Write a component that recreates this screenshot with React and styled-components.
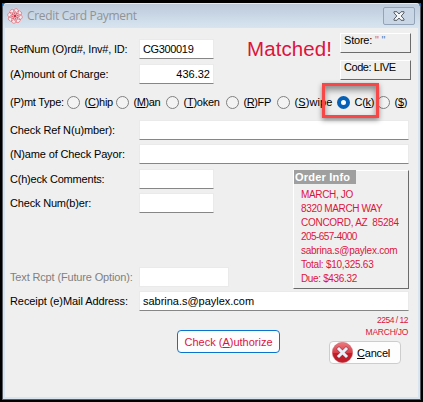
import React from 'react';
import styled, { createGlobalStyle } from 'styled-components';

const GlobalStyle = createGlobalStyle`
  body { margin: 0; background: #000; overflow: hidden; }
  * { box-sizing: border-box; }
`;

const crimson = '#dc143c';

const Screen = styled.div`
  width: 423px;
  height: 402px;
  padding: 3px 2px 2px;
  background: #000;
  font: 11px/14px "Liberation Sans", Arial, sans-serif;
  color: #000;
  white-space: pre;
`;

const Desktop = styled.div`
  height: 397px;
  background: #0c63ad;
`;

const Dialog = styled.div`
  height: 397px;
  display: flex;
  flex-direction: column;
  border: 1px solid #555b60;
  border-top-color: #e3ebf2;
  border-radius: 5px 5px 0 0;
  background: #d8e5f1;
  padding: 0 2px 2px;
`;

const TitleBar = styled.header`
  height: 24px;
  flex: none;
  display: flex;
  align-items: center;
  margin: 0 -2px;
  padding: 0 5px 0 4px;
  border-radius: 4px 4px 0 0;
  background: linear-gradient(#bccada, #d8e5f1);
`;

const Title = styled.h1`
  flex: 1;
  margin: 0 0 0 4px;
  font: 12px/16px "Open Sans", sans-serif;
  letter-spacing: ${(p) => p.$spacing}px;
  color: #909396;
`;

const CloseButton = styled.button`
  width: 32px;
  height: 18px;
  padding: 0;
  display: grid;
  place-items: center;
  border: 1px solid #93a3b8;
  border-radius: 2px;
  background: #c9d6e5;
`;

const Body = styled.main`
  flex: 1;
  display: flex;
  flex-direction: column;
  padding: 11px 0 0 5px;
  background: #efefef;
`;

const TopArea = styled.section`
  display: flex;
  height: 46px;
`;

const FormColumn = styled.div`
  width: ${(p) => p.$width}px;
  display: flex;
  flex-direction: column;
  gap: ${(p) => p.$gap}px;
`;

const FormRow = styled.label`
  display: grid;
  grid-template-columns: 129px ${(p) => p.$field}px;
  align-items: center;
  height: 20px;
  color: ${(p) => (p.$disabled ? '#7f7f7f' : '#000')};
`;

const FutureRow = styled(FormRow)`
  margin-top: auto;
`;

const Text = styled.span`
  letter-spacing: ${(p) => p.$spacing || 0}px;
`;

const Field = styled.span`
  height: 20px;
  padding: 2px 3px 0;
  background: #fff;
  border: 1px solid #eaeaea;
  border-bottom-color: ${(p) => (p.$disabled ? '#eaeaea' : '#868686')};
  text-align: ${(p) => (p.$right ? 'right' : 'left')};
  letter-spacing: ${(p) => p.$spacing || 0}px;
  color: #000;
`;

const Status = styled.strong`
  width: 93px;
  margin-left: 33px;
  font: 20.5px/20px "Liberation Sans", Arial, sans-serif;
  letter-spacing: ${(p) => p.$spacing}px;
  color: ${crimson};
`;

const Tags = styled.div`
  display: flex;
  flex-direction: column;
  gap: 7px;
  margin-top: -6px;
`;

const Tag = styled.div`
  width: 71px;
  height: 20px;
  padding-left: 3px;
  border: 1px solid #fff;
  border-right-color: #6b6b6b;
  border-bottom-color: #6b6b6b;
  line-height: 12px;
  letter-spacing: ${(p) => p.$spacing || 0}px;
`;

const Quote = styled.span`
  color: ${(p) => p.$color};
`;

const RadioRow = styled.section`
  position: relative;
  display: flex;
  align-items: center;
  height: 14px;
  margin-top: 10px;
`;

const RadioCaption = styled.span`
  width: 57px;
  letter-spacing: -0.25px;
`;

const Radio = styled.label`
  width: ${(p) => p.$width}px;
  flex: none;
  display: flex;
  align-items: center;
  gap: 4.5px;
`;

const Dot = styled.span`
  width: 13px;
  height: 13px;
  flex: none;
  border: ${(p) => (p.$checked ? '4px solid #0560b8' : '1px solid #808080')};
  border-radius: 50%;
  background: ${(p) => (p.$checked ? '#fff' : '#f3f3f3')};
`;

const Highlight = styled.div`
  position: absolute;
  left: 312px;
  top: -12px;
  width: 57px;
  height: 35px;
  border: 3px solid #f74747;
  box-shadow: 0 2px 5px rgba(0, 0, 0, 0.45), inset 0 4px 6px rgba(0, 0, 0, 0.42);
`;

const WideFields = styled(FormColumn)`
  margin-top: 11px;
`;

const Middle = styled.section`
  display: flex;
  margin-top: 5px;
  height: 118px;
`;

const OrderBox = styled.aside`
  width: 116px;
  height: 119px;
  margin: 1px 0 0 59px;
  border: 1px solid #fff;
  border-right-color: #6b6b6b;
  border-bottom-color: #6b6b6b;
  color: ${crimson};
  font-size: 10px;
`;

const OrderTitle = styled.h2`
  width: 62px;
  height: 14px;
  margin: -1px 0 4px;
  padding-left: 1px;
  background: #9f9f9f;
  color: #fff;
  font: bold 11px/14px "Liberation Sans", Arial, sans-serif;
  letter-spacing: ${(p) => p.$spacing}px;
`;

const OrderLine = styled.div`
  padding-left: 7px;
  letter-spacing: ${(p) => p.$spacing || 0}px;
`;

const EmailRow = styled(FormRow)`
  margin-top: 4px;
`;

const Footer = styled.footer`
  display: flex;
  justify-content: space-between;
  align-items: flex-start;
  padding: 3px 10px 0 167px;
`;

const AuthorizeButton = styled.button`
  width: 103px;
  height: 23px;
  margin-top: 16px;
  padding: 0;
  border: 1px solid #0a74cc;
  border-radius: 4px;
  background: #fdfdfd;
  color: ${crimson};
  font: inherit;
`;

const FooterSide = styled.div`
  display: flex;
  flex-direction: column;
  align-items: flex-end;
`;

const Note = styled.div`
  font-size: 8.5px;
  line-height: 12px;
  letter-spacing: ${(p) => p.$spacing || 0}px;
  color: ${crimson};
`;

const CancelButton = styled.button`
  width: 72px;
  height: 23px;
  margin: 3px 7px 0 0;
  padding: 0 0 0 2px;
  display: flex;
  align-items: center;
  gap: 4px;
  border: 1px solid #cdcdcd;
  border-radius: 4px;
  background: #fdfdfd;
  font: inherit;
  color: #000;
`;

function Rosette() {
  const petals = [0, 45, 90, 135, 180, 225, 270, 315];
  return (
    <svg width="16" height="16" viewBox="0 0 16 16" fill="none">
      <circle cx="8" cy="8" r="7.6" fill="#f5ecf1" />
      {petals.map((a) => (
        <g key={a} transform={`rotate(${a + 12} 8 8)`} stroke="#d9535f" strokeWidth=".55">
          <circle cx="8" cy="3.2" r="2.600" />
          <path d="M8 8C6.500 6.500 6.500 4.500 8 3.400" />
        </g>
      ))}
      <circle cx="8" cy="8" r="1" fill="#cc1830" />
    </svg>
  );
}

function CloseGlyph() {
  return (
    <svg width="12" height="10" viewBox="0 0 12 10">
      <path
        d="M1 .7h3L6 3 8 .7h3v1.200L8.200 5 11 8.100v1.200H8L6 7 4 9.300H1V8.100L3.800 5 1 1.900z"
        fill="#f4f6f8" stroke="#565d66" strokeWidth="1"
      />
    </svg>
  );
}

function CancelGlyph() {
  return (
    <svg width="21" height="21" viewBox="0 0 21 21">
      <defs>
        <linearGradient id="ball" x2="0" y2="1">
          <stop offset="0" stopColor="#ee7a7e" />
          <stop offset=".5" stopColor="#d8404a" />
          <stop offset=".55" stopColor="#c41c26" />
          <stop offset="1" stopColor="#c01c28" />
        </linearGradient>
      </defs>
      <circle cx="10.500" cy="10.500" r="10.200" fill="url(#ball)" stroke="#c9606a" strokeWidth=".5" />
      <path d="M7 7l7 7M14 7l-7 7" stroke="#8c3a52" strokeWidth="4.400" strokeLinecap="square" opacity=".6" />
      <path d="M7 7l7 7M14 7l-7 7" stroke="#e6f2fa" strokeWidth="3" strokeLinecap="square" />
    </svg>
  );
}

const options = [
  { width: 49, pre: '(', key: 'C', post: ')hip', spacing: -0.25 },
  { width: 50, pre: '(', key: 'M', post: ')an', spacing: -0.4 },
  { width: 60, pre: '(', key: 'T', post: ')oken', spacing: -0.25 },
  { width: 51, pre: '(', key: 'R', post: ')FP', spacing: -0.4 },
  { width: 60, pre: '(', key: 'S', post: ')wipe', spacing: 0.1 },
  { width: 40, pre: 'C(', key: 'k', post: ')', spacing: -0.3, checked: true },
  { width: 32, pre: '(', key: '$', post: ')', spacing: -0.3 },
];

const orderLines = [
  ['MARCH, JO', -0.35],
  ['8320 MARCH WAY', -0.35],
  ['CONCORD, AZ  85284', -0.28],
  ['205-657-4000', -0.55],
  ['sabrina.s@paylex.com', -0.25],
  ['Total: $10,325.63', -0.25],
  ['Due: $436.32', -0.35],
];

export default function App() {
  return (
    <Screen>
      <GlobalStyle />
      <Desktop>
        <Dialog>
          <TitleBar>
            <Rosette />
            <Title $spacing={-0.33}>Credit Card Payment</Title>
            <CloseButton aria-label="Close"><CloseGlyph /></CloseButton>
          </TitleBar>
          <Body>
            <TopArea>
              <FormColumn $width={204} $gap={5}>
                <FormRow $field={75}>
                  <Text $spacing={-0.2}>RefNum (O)rd#, Inv#, ID:</Text>
                  <Field $spacing={-0.35}>CG300019</Field>
                </FormRow>
                <FormRow $field={75}>
                  <Text $spacing={-0.06}>(A)mount of Charge:</Text>
                  <Field $right>436.32</Field>
                </FormRow>
              </FormColumn>
              <Status $spacing={0.1}>Matched!</Status>
              <Tags>
                <Tag $spacing={-0.2}>
                  Store: <Quote $color="#e0701c">"</Quote> <Quote $color="#3f86bd">"</Quote>
                </Tag>
                <Tag $spacing={-0.45}>Code: LIVE</Tag>
              </Tags>
            </TopArea>
            <RadioRow>
              <RadioCaption>(P)mt Type:</RadioCaption>
              {options.map((o) => (
                <Radio key={o.key} $width={o.width}>
                  <Dot $checked={o.checked} />
                  <Text $spacing={o.spacing}>{o.pre}<u>{o.key}</u>{o.post}</Text>
                </Radio>
              ))}
              <Highlight />
            </RadioRow>
            <WideFields $width={399} $gap={4}>
              <FormRow $field={270}><Text $spacing={-0.13}>Check Ref N(u)mber):</Text><Field /></FormRow>
              <FormRow $field={270}><Text $spacing={-0.14}>(N)ame of Check Payor:</Text><Field /></FormRow>
            </WideFields>
            <Middle>
              <FormColumn $width={224} $gap={4}>
                <FormRow $field={75}><Text $spacing={-0.2}>C(h)eck Comments:</Text><Field /></FormRow>
                <FormRow $field={75}><Text $spacing={-0.18}>Check Num(b)er:</Text><Field /></FormRow>
                <FutureRow $field={90} $disabled>
                  <Text $spacing={-0.15}>Text Rcpt (Future Option):</Text><Field $disabled />
                </FutureRow>
              </FormColumn>
              <OrderBox>
                <OrderTitle $spacing={0.2}>Order Info</OrderTitle>
                {orderLines.map(([line, spacing]) => (
                  <OrderLine key={line} $spacing={spacing}>{line}</OrderLine>
                ))}
              </OrderBox>
            </Middle>
            <EmailRow $field={270}>
              <Text $spacing={-0.08}>Receipt (e)Mail Address:</Text>
              <Field $spacing={-0.02}>sabrina.s@paylex.com</Field>
            </EmailRow>
            <Footer>
              <AuthorizeButton>Check (<u>A</u>)uthorize</AuthorizeButton>
              <FooterSide>
                <Note $spacing={-0.5}>2254 / 12</Note>
                <Note $spacing={-0.25}>MARCH/JO</Note>
                <CancelButton><CancelGlyph /><Text $spacing={-0.2}><u>C</u>ancel</Text></CancelButton>
              </FooterSide>
            </Footer>
          </Body>
        </Dialog>
      </Desktop>
    </Screen>
  );
}
